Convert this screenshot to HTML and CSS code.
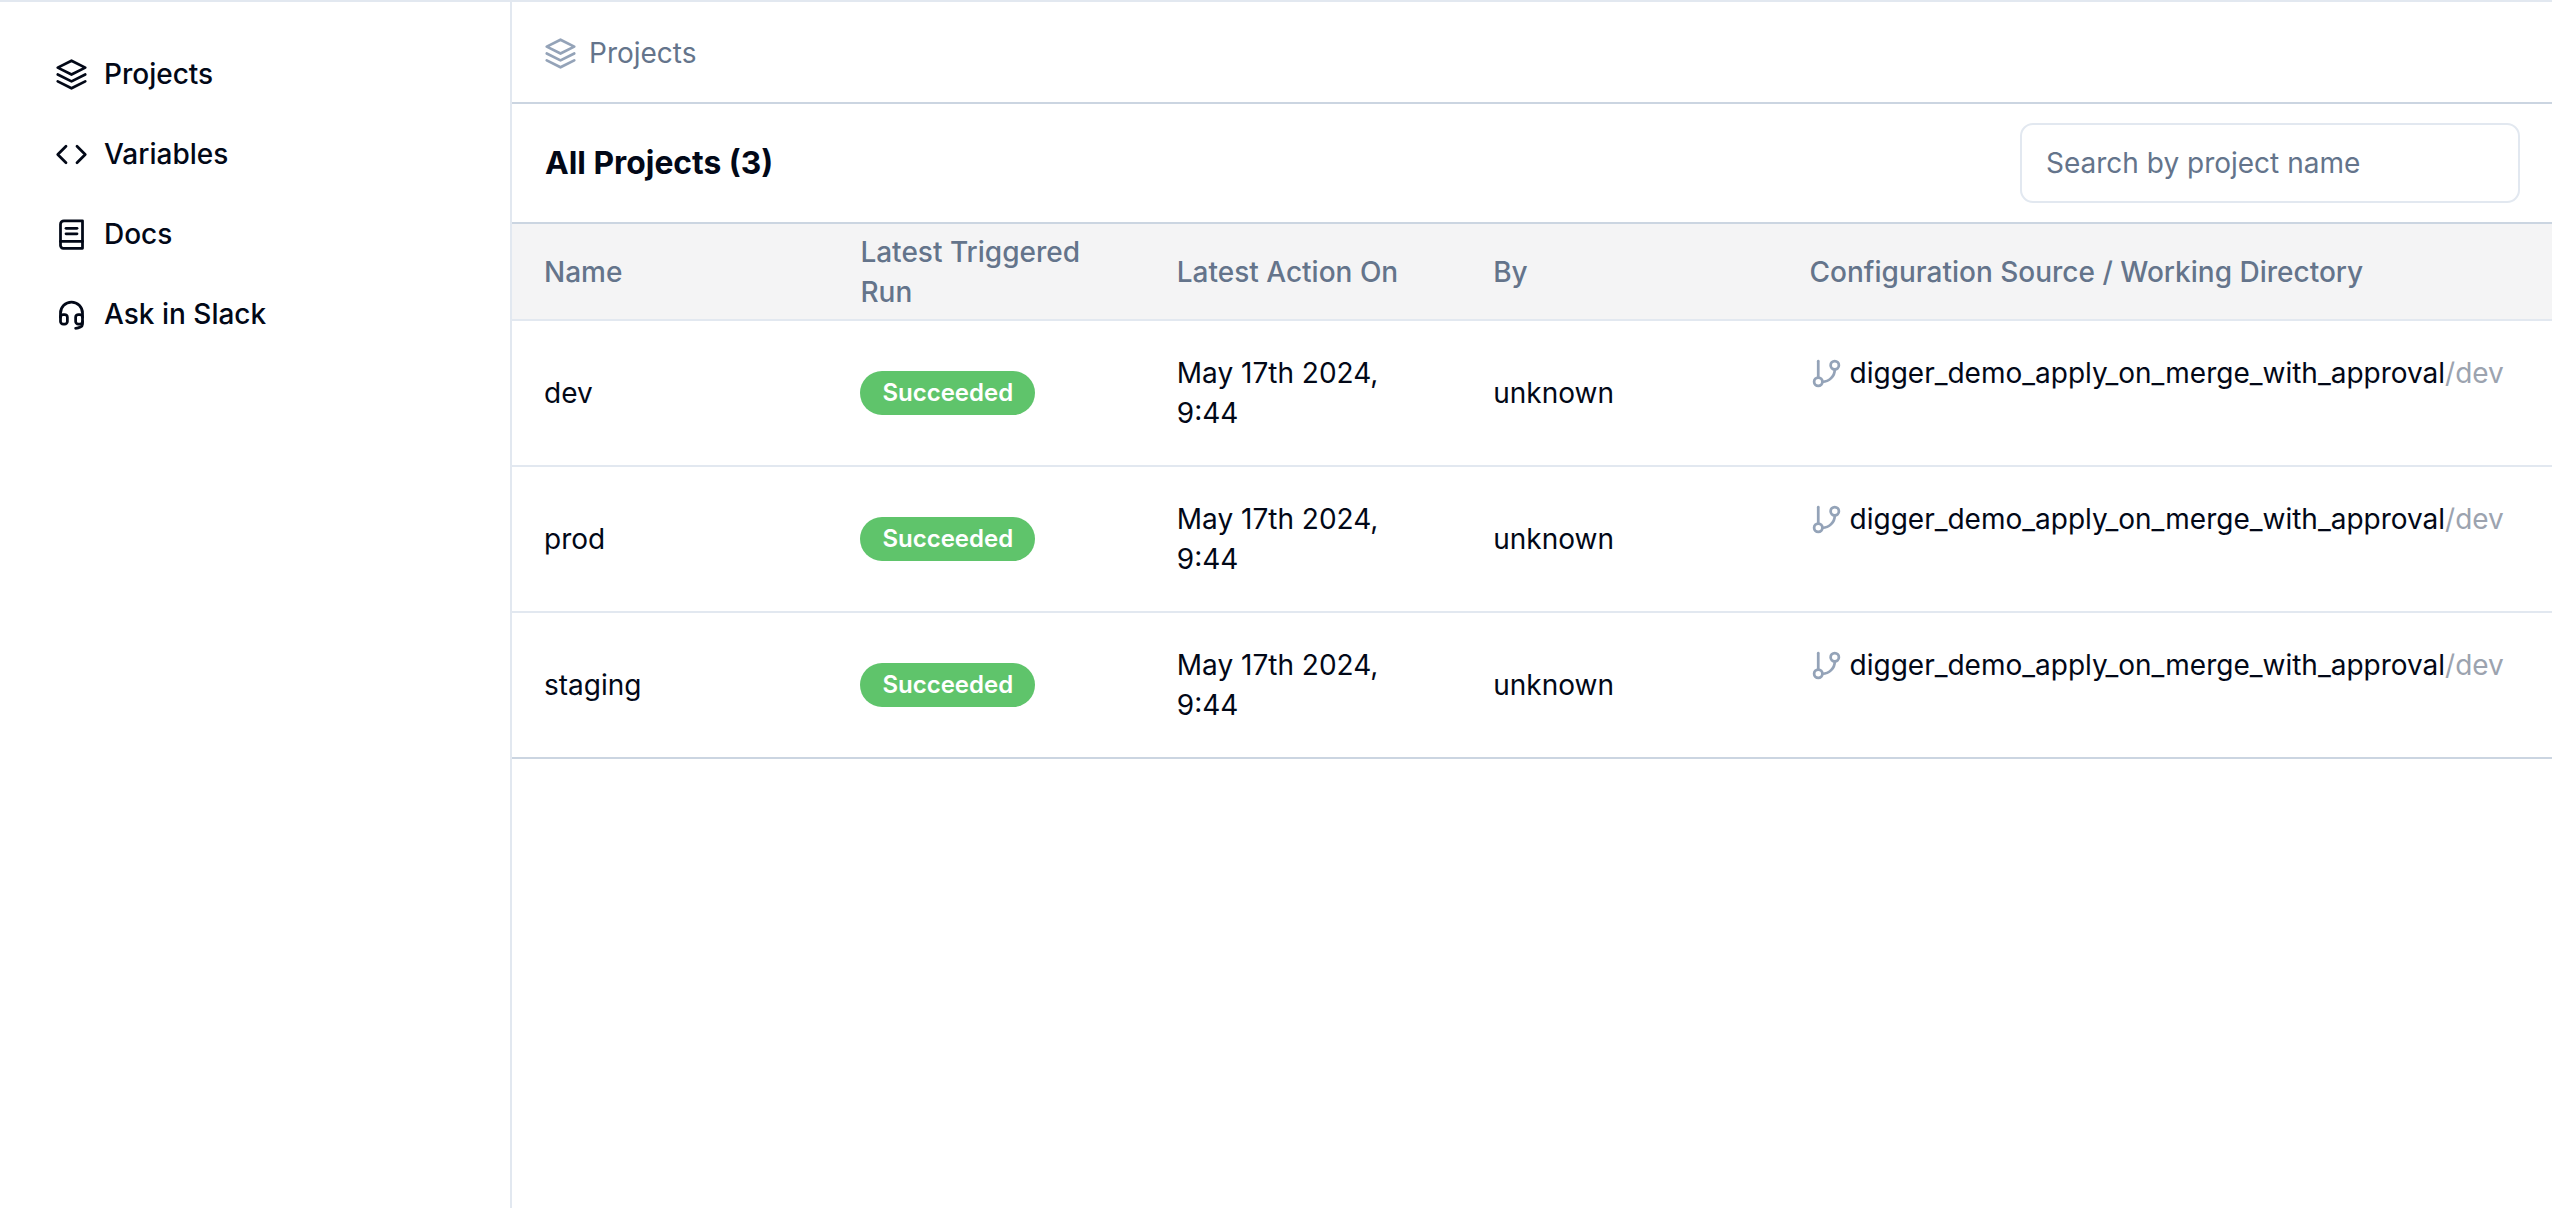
FILE: index.html
```html
<!DOCTYPE html>
<html lang="en">
<head>
    <meta charset="UTF-8">
    <meta name="viewport" content="width=device-width, initial-scale=1.0">
    <title>Projects</title>
    <link rel="stylesheet" href="styles.css">
</head>
<body>
    <div class="app">
        <nav class="sidebar">
            <a class="nav-item" href="#">
                <svg class="nav-icon" viewBox="0 0 24 24"><path d="M12 2 2 7l10 5 10-5-10-5z"/><path d="m2 17 10 5 10-5"/><path d="m2 12 10 5 10-5"/></svg>
                Projects
            </a>
            <a class="nav-item" href="#">
                <svg class="nav-icon" viewBox="0 0 24 24"><path d="m16 18 6-6-6-6"/><path d="m8 6-6 6 6 6"/></svg>
                Variables
            </a>
            <a class="nav-item" href="#">
                <svg class="nav-icon" viewBox="0 0 24 24"><path d="M4 4.5A2.5 2.5 0 0 1 6.5 2H20v20H6a2 2 0 0 1-2-2V4.5z"/><path d="M4 17h16"/><path d="M8 7.5h8"/><path d="M8 11.5h8"/></svg>
                Docs
            </a>
            <a class="nav-item" href="#">
                <svg class="nav-icon" viewBox="0 0 24 24"><path d="M4 14v-3a8 8 0 1 1 16 0v3"/><path d="M20 17v2c0 1.7-2.5 3-5 3"/><path d="M4 14a2 2 0 0 1 2-2h1a2 2 0 0 1 2 2v3a2 2 0 0 1-2 2H6a2 2 0 0 1-2-2v-3z"/><path d="M15 14a2 2 0 0 1 2-2h1a2 2 0 0 1 2 2v3a2 2 0 0 1-2 2h-1a2 2 0 0 1-2-2v-3z"/></svg>
                Ask in Slack
            </a>
        </nav>

        <main class="content">
            <div class="breadcrumb">
                <svg class="crumb-icon" viewBox="0 0 24 24"><path d="M12 2 2 7l10 5 10-5-10-5z"/><path d="m2 17 10 5 10-5"/><path d="m2 12 10 5 10-5"/></svg>
                Projects
            </div>

            <div class="page-head">
                <h1>All Projects (3)</h1>
                <input class="search" type="text" placeholder="Search by project name">
            </div>

            <table class="projects">
                <colgroup>
                    <col class="col-std"><col class="col-std"><col class="col-std"><col class="col-std"><col>
                </colgroup>
                <thead>
                    <tr>
                        <th>Name</th>
                        <th>Latest Triggered Run</th>
                        <th>Latest Action On</th>
                        <th>By</th>
                        <th>Configuration Source / Working Directory</th>
                    </tr>
                </thead>
                <tbody>
                    <tr>
                        <td>dev</td>
                        <td><span class="badge">Succeeded</span></td>
                        <td>May 17th 2024, 9:44</td>
                        <td>unknown</td>
                        <td class="source">
                            <div class="source-line">
                                <svg class="branch-icon" viewBox="0 0 24 24"><path d="M6 3v12"/><circle cx="18" cy="6" r="3"/><circle cx="6" cy="18" r="3"/><path d="M18 9a9 9 0 0 1-9 9"/></svg>
                                <span>digger_demo_apply_on_merge_with_approval<span class="dir">/dev</span></span>
                            </div>
                        </td>
                    </tr>
                    <tr>
                        <td>prod</td>
                        <td><span class="badge">Succeeded</span></td>
                        <td>May 17th 2024, 9:44</td>
                        <td>unknown</td>
                        <td class="source">
                            <div class="source-line">
                                <svg class="branch-icon" viewBox="0 0 24 24"><path d="M6 3v12"/><circle cx="18" cy="6" r="3"/><circle cx="6" cy="18" r="3"/><path d="M18 9a9 9 0 0 1-9 9"/></svg>
                                <span>digger_demo_apply_on_merge_with_approval<span class="dir">/dev</span></span>
                            </div>
                        </td>
                    </tr>
                    <tr>
                        <td>staging</td>
                        <td><span class="badge">Succeeded</span></td>
                        <td>May 17th 2024, 9:44</td>
                        <td>unknown</td>
                        <td class="source">
                            <div class="source-line">
                                <svg class="branch-icon" viewBox="0 0 24 24"><path d="M6 3v12"/><circle cx="18" cy="6" r="3"/><circle cx="6" cy="18" r="3"/><path d="M18 9a9 9 0 0 1-9 9"/></svg>
                                <span>digger_demo_apply_on_merge_with_approval<span class="dir">/dev</span></span>
                            </div>
                        </td>
                    </tr>
                </tbody>
            </table>
        </main>
    </div>
</body>
</html>
```

FILE: styles.css
```css
* {
    box-sizing: border-box;
}

body {
    margin: 0;
    font-family: Inter, "Liberation Sans", sans-serif;
    font-size: 28px;
    line-height: 40px;
    color: #020817;
    background-color: #fff;
}

.app {
    display: flex;
    height: 1208px;
    border-top: 2px solid #e2e8f0;
}

.sidebar {
    width: 512px;
    flex-shrink: 0;
    padding: 52px 55px;
    border-right: 2px solid #e2e8f0;
    display: flex;
    flex-direction: column;
    gap: 40px;
}

.nav-item {
    display: flex;
    align-items: center;
    gap: 16px;
    color: #020817;
    font-weight: 500;
    text-decoration: none;
}

.nav-icon {
    width: 33px;
    height: 33px;
    fill: none;
    stroke: #020817;
    stroke-width: 2;
    stroke-linecap: round;
    stroke-linejoin: round;
}

.content {
    flex: 1;
    min-width: 0;
}

.breadcrumb {
    height: 102px;
    display: flex;
    align-items: center;
    gap: 12px;
    padding: 2px 0 0 32px;
    color: #64748b;
    border-bottom: 2px solid #cbd5e1;
}

.crumb-icon {
    width: 33px;
    height: 33px;
    fill: none;
    stroke: #94a3b8;
    stroke-width: 2;
    stroke-linecap: round;
    stroke-linejoin: round;
}

.page-head {
    height: 120px;
    display: flex;
    align-items: center;
    justify-content: space-between;
    padding: 0 32px 0 33px;
    border-bottom: 2px solid #cbd5e1;
}

.page-head h1 {
    margin: 0;
    font-size: 31.8px;
    font-weight: 700;
    color: #020817;
}

.search {
    width: 500px;
    height: 80px;
    padding: 0 24px;
    border: 2px solid #e2e8f0;
    border-radius: 13px;
    font: inherit;
    background-color: #fff;
}

.search::placeholder {
    color: #64748b;
    opacity: 1;
}

.projects {
    width: 100%;
    table-layout: fixed;
    border-collapse: collapse;
    border-bottom: 2px solid #cbd5e1;
}

.col-std {
    width: 316.4px;
}

.projects th {
    height: 96px;
    padding: 0 32px;
    text-align: left;
    font-weight: 500;
    color: #64748b;
    background-color: #f4f4f5;
    border-bottom: 2px solid #e2e8f0;
}

.projects td {
    height: 146px;
    padding: 0 32px;
    border-bottom: 2px solid #e2e8f0;
    font-weight: 400;
}

.projects tbody tr:last-child td {
    border-bottom: 2px solid #cbd5e1;
}

.projects td.source {
    padding: 32px 0 32px 32px;
    vertical-align: top;
    white-space: nowrap;
}

.source-line {
    display: flex;
    align-items: center;
    gap: 7px;
}

.badge {
    display: inline-flex;
    align-items: center;
    height: 44px;
    padding: 0 22px;
    border-radius: 22px;
    background-color: #5fc46b;
    color: #fff;
    font-size: 24px;
    font-weight: 600;
    vertical-align: middle;
}

.branch-icon {
    width: 33px;
    height: 33px;
    flex-shrink: 0;
    fill: none;
    stroke: #94a3b8;
    stroke-width: 2;
    stroke-linecap: round;
    stroke-linejoin: round;
}

.dir {
    color: #9ca3af;
}
```
